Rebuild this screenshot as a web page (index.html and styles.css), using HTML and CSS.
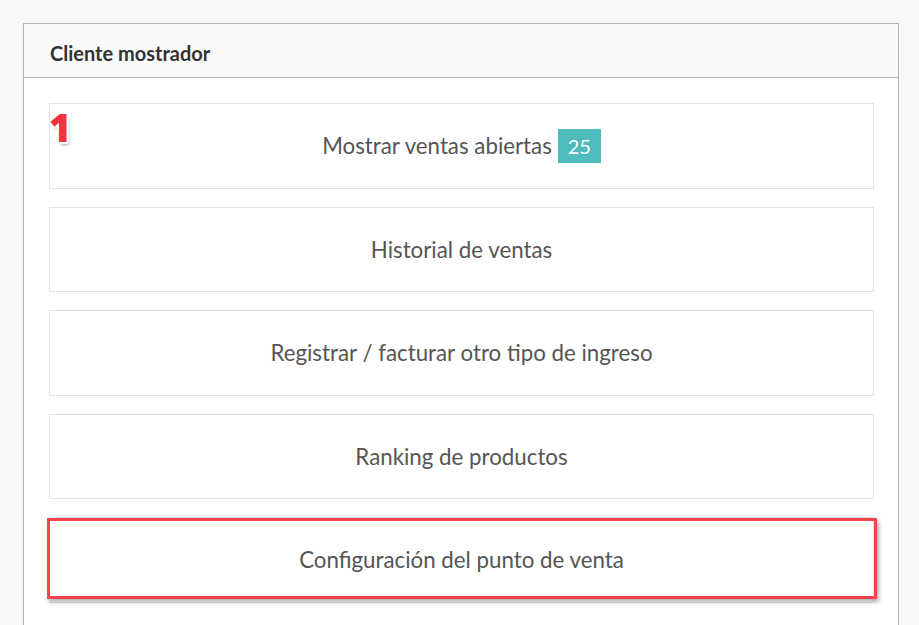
FILE: index.html
```html
<!DOCTYPE html>
<html lang="es">
<head>
<meta charset="utf-8">
<title>Cliente mostrador</title>
<link rel="stylesheet" href="styles.css">
</head>
<body>
<div class="panel">
  <div class="panel-header">Cliente mostrador</div>
  <div class="panel-body">
    <a class="action"><span class="step">1</span><span class="label">Mostrar ventas abiertas</span><span class="badge">25</span></a>
    <a class="action"><span class="label">Historial de ventas</span></a>
    <a class="action"><span class="label">Registrar / facturar otro tipo de ingreso</span></a>
    <a class="action"><span class="label">Ranking de productos</span></a>
    <a class="action"><span class="highlight"></span><span class="label">Configuración del punto de venta</span></a>
  </div>
</div>
</body>
</html>
```

FILE: styles.css
```css
html, body {
  margin: 0;
  padding: 0;
  background: #f7f8fa;
  font-family: Lato, "Open Sans", sans-serif;
  overflow: hidden;
}

.panel {
  margin: 23px 0 0 23px;
  width: 876px;
  box-sizing: border-box;
  border: 1px solid #b4b4b4;
  background: #ffffff;
  height: 640px;
}

.panel-header {
  height: 54px;
  box-sizing: border-box;
  background: #fafafa;
  border-bottom: 1px solid #b4b4b4;
  padding: 4px 26px 0;
  display: flex;
  align-items: center;
  font-size: 20px;
  font-weight: 700;
  color: #333333;
}

.panel-body {
  padding: 25px 24px 0 25px;
  display: flex;
  flex-direction: column;
  gap: 18px;
}

.action {
  position: relative;
  height: 85.5px;
  box-sizing: border-box;
  border: 1px solid #e4e4e4;
  display: flex;
  align-items: center;
  justify-content: center;
  font-size: 22.3px;
  color: #555555;
}

.badge {
  display: inline-flex;
  align-items: center;
  justify-content: center;
  width: 43px;
  height: 34px;
  margin-left: 6px;
  background: #4ebcbc;
  color: #ffffff;
  font-size: 20px;
}

.step {
  position: absolute;
  left: -1px;
  top: 1px;
  font-family: "Open Sans", Lato, sans-serif;
  font-weight: 800;
  font-size: 38px;
  line-height: 44px;
  color: #f2343c;
  text-shadow:
    2px 0 0 #fff, -2px 0 0 #fff, 0 2px 0 #fff, 0 -2px 0 #fff,
    1.5px 1.5px 0 #fff, -1.5px 1.5px 0 #fff, 1.5px -1.5px 0 #fff, -1.5px -1.5px 0 #fff,
    2px 3px 3px rgba(0,0,0,0.35);
}

.highlight {
  position: absolute;
  left: -3px;
  right: -4px;
  top: 0px;
  height: 81px;
  box-sizing: border-box;
  border: 3px solid #f5454a;
  box-shadow: 2px 3px 4px rgba(0,0,0,0.3);
}
```
